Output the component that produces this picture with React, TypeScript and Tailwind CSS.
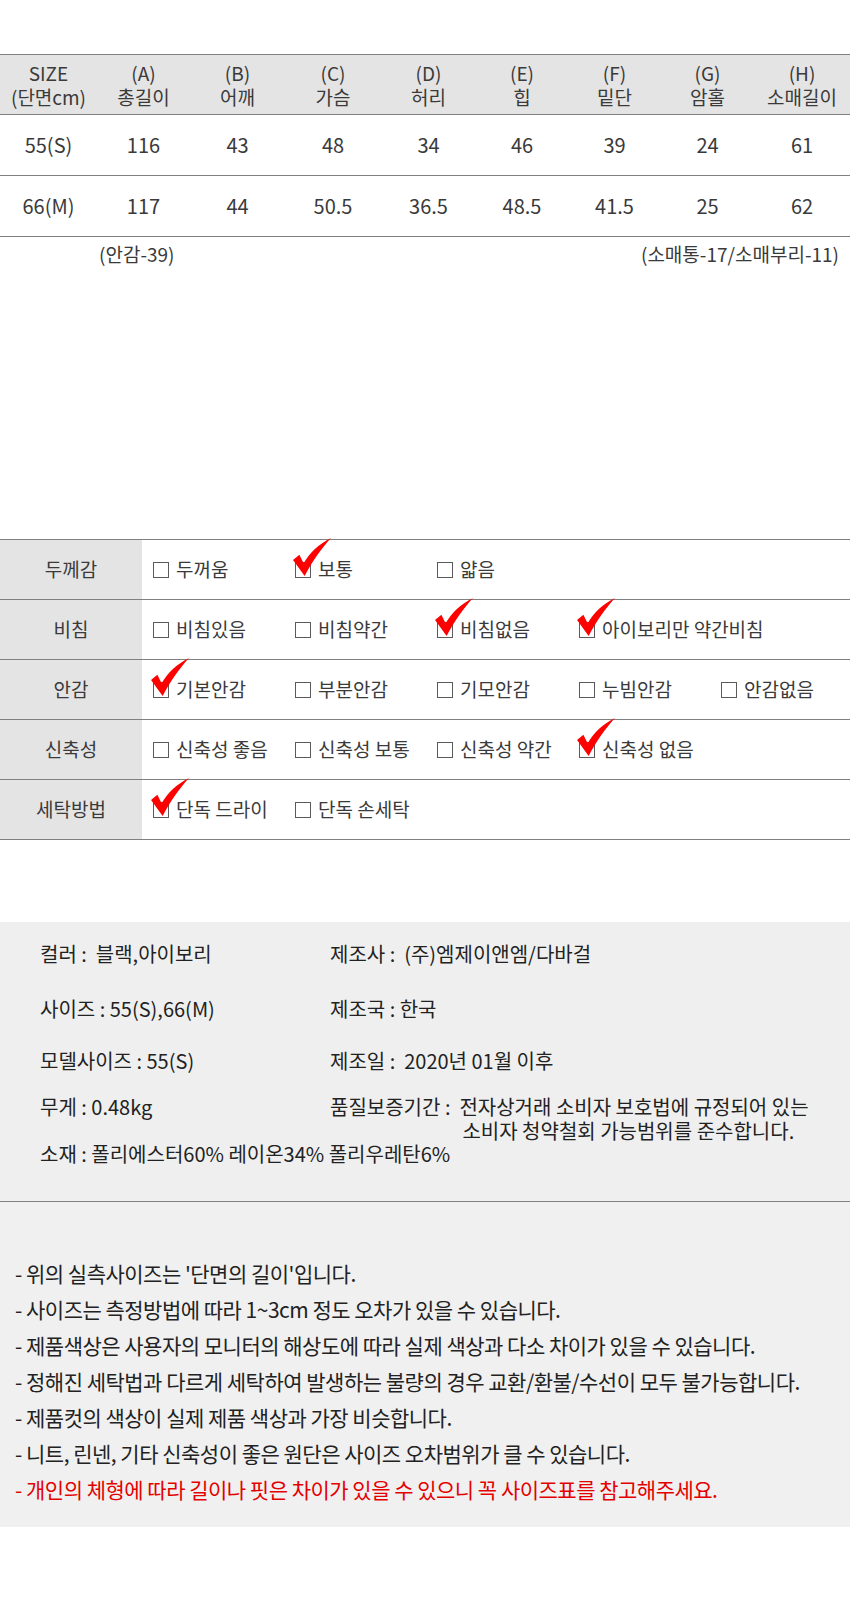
const font = { fontFamily: '"Noto Sans CJK KR", "Noto Sans", sans-serif' };

const sizeHead = [
  ["SIZE", "(단면cm)"],
  ["(A)", "총길이"],
  ["(B)", "어깨"],
  ["(C)", "가슴"],
  ["(D)", "허리"],
  ["(E)", "힙"],
  ["(F)", "밑단"],
  ["(G)", "암홀"],
  ["(H)", "소매길이"],
];

const sizeRows = [
  ["55(S)", "116", "43", "48", "34", "46", "39", "24", "61"],
  ["66(M)", "117", "44", "50.5", "36.5", "48.5", "41.5", "25", "62"],
];

const fabric: { label: string; options: { text: string; on?: boolean }[] }[] = [
  { label: "두께감", options: [{ text: "두꺼움" }, { text: "보통", on: true }, { text: "얇음" }] },
  {
    label: "비침",
    options: [
      { text: "비침있음" },
      { text: "비침약간" },
      { text: "비침없음", on: true },
      { text: "아이보리만 약간비침", on: true },
    ],
  },
  {
    label: "안감",
    options: [
      { text: "기본안감", on: true },
      { text: "부분안감" },
      { text: "기모안감" },
      { text: "누빔안감" },
      { text: "안감없음" },
    ],
  },
  {
    label: "신축성",
    options: [
      { text: "신축성 좋음" },
      { text: "신축성 보통" },
      { text: "신축성 약간" },
      { text: "신축성 없음", on: true },
    ],
  },
  { label: "세탁방법", options: [{ text: "단독 드라이", on: true }, { text: "단독 손세탁" }] },
];

const notes = [
  "- 위의 실측사이즈는 '단면의 길이'입니다.",
  "- 사이즈는 측정방법에 따라 1~3cm 정도 오차가 있을 수 있습니다.",
  "- 제품색상은 사용자의 모니터의 해상도에 따라 실제 색상과 다소 차이가 있을 수 있습니다.",
  "- 정해진 세탁법과 다르게 세탁하여 발생하는 불량의 경우 교환/환불/수선이 모두 불가능합니다.",
  "- 제품컷의 색상이 실제 제품 색상과 가장 비슷합니다.",
  "- 니트, 린넨, 기타 신축성이 좋은 원단은 사이즈 오차범위가 클 수 있습니다.",
];

function Check() {
  return (
    <svg
      viewBox="0 0 38 38"
      className="absolute left-[-4px] top-[-25px] h-[40px] w-[40px]"
    >
      <path
        d="M1,21 L7,16 L11,24 C17,14 25,6 37,0 C28,10 20,21 12,36 Z"
        fill="#ff0000"
      />
    </svg>
  );
}

function Option({ text, on }: { text: string; on?: boolean }) {
  return (
    <div className="flex items-center pl-[11px]">
      <span className="relative mr-[7px] inline-block h-[16px] w-[16px] shrink-0 border-[1.5px] border-[#5a5a5a]">
        {on && <Check />}
      </span>
      <span className="whitespace-nowrap">{text}</span>
    </div>
  );
}

export default function App() {
  return (
    <div className="w-[850px] h-[1600px] bg-white text-[#3a3a3a]" style={font}>
      {/* size table */}
      <div className="pt-[54px]">
        <div className="grid grid-cols-[97px_93px_95px_96px_95px_92px_93px_93px_96px] border-y border-[#808080] bg-[#e4e4e4] h-[61px] text-[19px] leading-[24px]">
          {sizeHead.map(([a, b]) => (
            <div key={a} className="flex flex-col items-center justify-center">
              <span>{a}</span>
              <span>{b}</span>
            </div>
          ))}
        </div>
        {sizeRows.map((row) => (
          <div
            key={row[0]}
            className="grid grid-cols-[97px_93px_95px_96px_95px_92px_93px_93px_96px] border-b border-[#808080] h-[61px] text-[20px]"
          >
            {row.map((v, i) => (
              <div key={i} className="flex items-center justify-center">
                {v}
              </div>
            ))}
          </div>
        ))}
        <div className="flex justify-between items-center h-[26px] mt-[4px] text-[19px] pr-[11px]">
          <span className="ml-[99px]">(안감-39)</span>
          <span>(소매통-17/소매부리-11)</span>
        </div>
      </div>

      {/* fabric table */}
      <div className="mt-[272px] border-t border-[#808080] text-[19px]">
        {fabric.map((r) => (
          <div
            key={r.label}
            className="grid grid-cols-[142px_142px_142px_142px_142px_140px] h-[60px] border-b border-[#808080]"
          >
            <div className="flex items-center justify-center bg-[#e4e4e4]">{r.label}</div>
            {r.options.map((o) => (
              <Option key={o.text} text={o.text} on={o.on} />
            ))}
          </div>
        ))}
      </div>

      {/* product info */}
      <div className="mt-[82px] h-[280px] bg-[#efefef] border-b border-[#808080] pt-[19px] pl-[40px] text-[20px] text-[#222]">
        <div className="grid grid-cols-[290px_1fr] leading-[26px]">
          <div className="whitespace-pre">컬러 :  블랙,아이보리</div>
          <div className="whitespace-pre">제조사 :  (주)엠제이앤엠/다바걸</div>
        </div>
        <div className="mt-[29px] grid grid-cols-[290px_1fr] leading-[26px]">
          <div className="whitespace-pre">사이즈 : 55(S),66(M)</div>
          <div className="whitespace-pre">제조국 : 한국</div>
        </div>
        <div className="mt-[26px] grid grid-cols-[290px_1fr] leading-[26px]">
          <div className="whitespace-pre">모델사이즈 : 55(S)</div>
          <div className="whitespace-pre">제조일 :  2020년 01월 이후</div>
        </div>
        <div className="mt-[21px] grid grid-cols-[290px_1fr] leading-[24px]">
          <div className="whitespace-pre">무게 : 0.48kg</div>
          <div className="flex">
            <span className="whitespace-pre">품질보증기간 :  </span>
            <div>
              <div className="whitespace-nowrap">전자상거래 소비자 보호법에 규정되어 있는</div>
              <div className="whitespace-nowrap pl-[3px]">소비자 청약철회 가능범위를 준수합니다.</div>
            </div>
          </div>
        </div>
        <div className="leading-[22px] whitespace-pre">소재 : 폴리에스터60% 레이온34% 폴리우레탄6%</div>
      </div>

      {/* notes */}
      <div className="h-[325px] bg-[#f0f0f0] pt-[53px] pl-[15px] text-[21px] leading-[36px] tracking-[-0.5px] text-[#222]">
        {notes.map((n) => (
          <div key={n} className="whitespace-pre">
            {n}
          </div>
        ))}
        <div className="whitespace-pre text-[#e50000]">
          - 개인의 체형에 따라 길이나 핏은 차이가 있을 수 있으니 꼭 사이즈표를 참고해주세요.
        </div>
      </div>
    </div>
  );
}
